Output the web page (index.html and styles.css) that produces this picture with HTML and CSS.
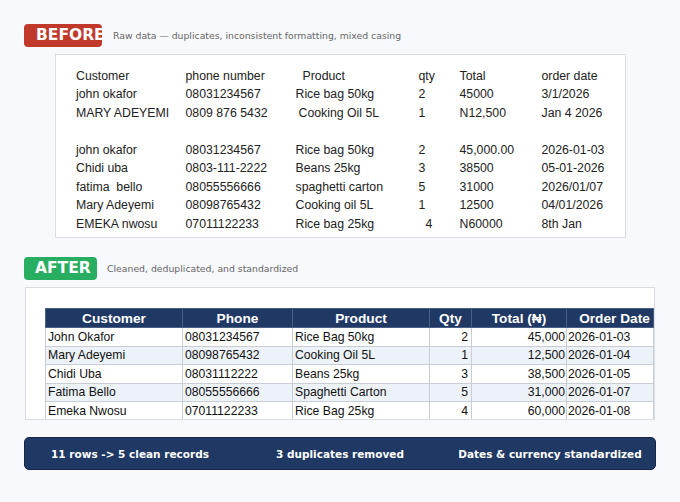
FILE: index.html
```html
<!DOCTYPE html>
<html>
<head>
<meta charset="utf-8">
<link rel="stylesheet" href="styles.css">
</head>
<body>
<main class="page">
  <div class="sec-head">
    <span class="badge badge-before">BEFORE</span>
    <span class="caption">Raw data — duplicates, inconsistent formatting, mixed casing</span>
  </div>
  <div class="raw-box">
    <div class="raw-grid">
      <span>Customer</span><span>phone number</span><span class="sh7">Product</span><span>qty</span><span>Total</span><span>order date</span>
      <span>john okafor</span><span>08031234567</span><span>Rice bag 50kg</span><span>2</span><span>45000</span><span>3/1/2026</span>
      <span>MARY ADEYEMI</span><span>0809 876 5432</span><span class="sh3">Cooking Oil 5L</span><span>1</span><span>N12,500</span><span>Jan 4 2026</span>
      <span class="blank"></span>
      <span>john okafor</span><span>08031234567</span><span>Rice bag 50kg</span><span>2</span><span>45,000.00</span><span>2026-01-03</span>
      <span>Chidi uba</span><span>0803-111-2222</span><span>Beans 25kg</span><span>3</span><span>38500</span><span>05-01-2026</span>
      <span>fatima  bello</span><span>08055556666</span><span>spaghetti carton</span><span>5</span><span>31000</span><span>2026/01/07</span>
      <span>Mary Adeyemi</span><span>08098765432</span><span>Cooking oil 5L</span><span>1</span><span>12500</span><span>04/01/2026</span>
      <span>EMEKA nwosu</span><span>07011122233</span><span>Rice bag 25kg</span><span class="sh7">4</span><span>N60000</span><span>8th Jan</span>
    </div>
  </div>

  <div class="sec-head sec-after">
    <span class="badge badge-after">AFTER</span>
    <span class="caption">Cleaned, deduplicated, and standardized</span>
  </div>
  <div class="clean-box">
    <table class="clean">
      <colgroup>
        <col class="c-cust"><col class="c-phone"><col class="c-prod"><col class="c-qty"><col class="c-total"><col class="c-date">
      </colgroup>
      <thead>
        <tr><th>Customer</th><th>Phone</th><th>Product</th><th>Qty</th><th>Total (₦)</th><th class="th-date">Order Date</th></tr>
      </thead>
      <tbody>
        <tr><td>John Okafor</td><td>08031234567</td><td>Rice Bag 50kg</td><td class="num">2</td><td class="num tot">45,000</td><td class="date">2026-01-03</td></tr>
        <tr><td>Mary Adeyemi</td><td>08098765432</td><td>Cooking Oil 5L</td><td class="num">1</td><td class="num tot">12,500</td><td class="date">2026-01-04</td></tr>
        <tr><td>Chidi Uba</td><td>08031112222</td><td>Beans 25kg</td><td class="num">3</td><td class="num tot">38,500</td><td class="date">2026-01-05</td></tr>
        <tr><td>Fatima Bello</td><td>08055556666</td><td>Spaghetti Carton</td><td class="num">5</td><td class="num tot">31,000</td><td class="date">2026-01-07</td></tr>
        <tr><td>Emeka Nwosu</td><td>07011122233</td><td>Rice Bag 25kg</td><td class="num">4</td><td class="num tot">60,000</td><td class="date">2026-01-08</td></tr>
      </tbody>
    </table>
  </div>

  <div class="summary">
    <span>11 rows -&gt; 5 clean records</span>
    <span>3 duplicates removed</span>
    <span>Dates &amp; currency standardized</span>
  </div>
</main>
</body>
</html>
```

FILE: styles.css
```css
* { box-sizing: border-box; }
html, body { margin: 0; padding: 0; }
body {
  background: #f8f9fc;
  font-family: "Liberation Sans", Arial, sans-serif;
  color: #222;
  width: 680px;
  height: 502px;
  overflow: hidden;
}
.page {
  padding: 24px 24px 0 24px;
}
.sec-head {
  display: flex;
  align-items: center;
  height: 23px;
}
.sec-after { margin-top: 19px; }
.badge {
  display: block;
  height: 23px;
  line-height: 23px;
  border-radius: 4px;
  color: #fff;
  font-family: "DejaVu Sans", sans-serif;
  font-weight: bold;
  font-size: 15.5px;
  white-space: nowrap;
  overflow: hidden;
}
.badge-before {
  width: 78px;
  padding-left: 12px;
  background: #c0392b;
}
.badge-after {
  width: 73px;
  padding-left: 11px;
  background: #27ae60;
}
.caption {
  font-family: "DejaVu Sans", sans-serif;
  font-size: 9.3px;
  color: #666;
  margin-left: 11px;
}
.sec-after .caption { margin-left: 10px; }

.raw-box {
  margin-top: 7px;
  margin-left: 31px;
  width: 571px;
  height: 184px;
  background: #fff;
  border: 1px solid #dcdde0;
  padding: 11.5px 0 0 20px;
}
.raw-grid {
  display: grid;
  grid-template-columns: 109.5px 110px 123px 41px 82px 1fr;
  grid-auto-rows: 18.5px;
  font-size: 12.3px;
  line-height: 18.5px;
  color: #222;
  white-space: pre;
}
.raw-grid .blank { grid-column: 1 / -1; }
.sh7 { padding-left: 7px; }
.sh3 { padding-left: 3px; }

.clean-box {
  margin-top: 7px;
  margin-left: 1px;
  width: 630px;
  height: 133px;
  background: #fff;
  border: 1px solid #dcdde0;
  padding: 20px 0 0 19px;
  overflow: hidden;
}
.clean {
  border-collapse: collapse;
  table-layout: fixed;
  width: 608px;
  font-size: 12.2px;
  color: #111;
}
.c-cust { width: 137px; }
.c-phone { width: 110px; }
.c-prod { width: 137px; }
.c-qty { width: 42px; }
.c-total { width: 95px; }
.c-date { width: 87px; }
.clean th {
  background: #1f3864;
  color: #fff;
  font-weight: bold;
  font-size: 13.7px;
  height: 19px;
  line-height: 17px;
  padding: 0;
  text-align: center;
  border: 1px solid #4a5f86;
  white-space: nowrap;
  overflow: hidden;
}
.clean th.th-date { padding-left: 9px; }
.clean td {
  height: 18.5px;
  line-height: 16px;
  padding: 0 2px;
  border: 1px solid #c9ced6;
  white-space: nowrap;
  overflow: hidden;
  text-align: left;
}
.clean tbody tr:nth-child(even) td { background: #edf2f9; }
.clean td.num { text-align: right; padding-right: 3px; }
.clean td.tot { padding-right: 1px; }
.clean td.date { padding-left: 1px; }

.summary {
  margin-top: 17px;
  width: 632px;
  height: 33px;
  background: #1f3864;
  border: 1px solid #14264a;
  border-radius: 5px;
  display: grid;
  grid-template-columns: 1fr 1fr 1fr;
  align-items: center;
  color: #fff;
  font-family: "DejaVu Sans", sans-serif;
  font-weight: bold;
  font-size: 10.5px;
  text-align: center;
  white-space: nowrap;
}
```
